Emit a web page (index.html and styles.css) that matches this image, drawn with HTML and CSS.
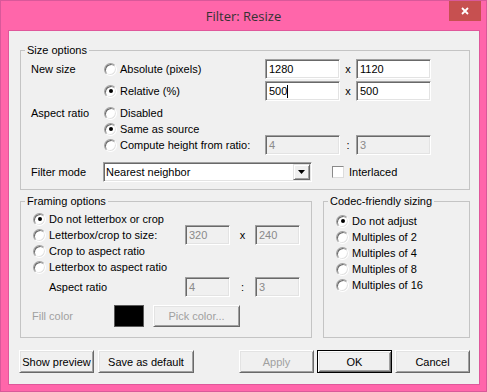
FILE: index.html
```html
<!DOCTYPE html>
<html lang="en">
<head>
    <meta charset="UTF-8">
    <title>Filter: Resize</title>
    <link rel="stylesheet" href="styles.css">
</head>
<body>
    <div class="window">
        <div class="titlebar">
            <span class="title">Filter: Resize</span>
            <span class="close">
                <svg width="8" height="8" viewBox="0 0 8 8"><path d="M1 1L7 7M7 1L1 7" stroke="#fff" stroke-width="1.8"/></svg>
            </span>
        </div>
        <div class="client">
            <fieldset class="group">
                <legend>Size options</legend>
                <div class="body size-body">
                    <div class="srow">
                        <span class="lbl">New size</span>
                        <span class="opt"><span class="radio"></span>Absolute (pixels)</span>
                        <span class="box">1280</span><span class="sep">x</span><span class="box">1120</span>
                    </div>
                    <div class="srow gap2">
                        <span class="lbl"></span>
                        <span class="opt"><span class="radio checked"></span>Relative (%)</span>
                        <span class="box">500<span class="caret"></span></span><span class="sep">x</span><span class="box">500</span>
                    </div>
                    <div class="srow r16 gap4">
                        <span class="lbl">Aspect ratio</span>
                        <span class="opt"><span class="radio"></span>Disabled</span>
                    </div>
                    <div class="srow r16">
                        <span class="lbl"></span>
                        <span class="opt"><span class="radio checked"></span>Same as source</span>
                    </div>
                    <div class="srow r16">
                        <span class="lbl"></span>
                        <span class="opt"><span class="radio"></span>Compute height from ratio:</span>
                        <span class="box disabled">4</span><span class="sep">:</span><span class="box disabled">3</span>
                    </div>
                    <div class="srow filter-row">
                        <span class="lbl filter-lbl">Filter mode</span>
                        <span class="combo">
                            <span class="combo-text">Nearest neighbor</span>
                            <span class="combo-btn">
                                <svg width="7" height="4" viewBox="0 0 7 4"><path d="M0 0H7L3.5 4Z" fill="#000"/></svg>
                            </span>
                        </span>
                        <span class="check"></span>
                        <span>Interlaced</span>
                    </div>
                </div>
            </fieldset>

            <div class="groups">
                <fieldset class="group framing">
                    <legend>Framing options</legend>
                    <div class="body framing-body">
                        <div class="frow"><span class="radio checked"></span>Do not letterbox or crop</div>
                        <div class="frow">
                            <span class="fopt"><span class="radio"></span>Letterbox/crop to size:</span>
                            <span class="box small disabled">320</span><span class="fsep">x</span><span class="box small disabled">240</span>
                        </div>
                        <div class="frow"><span class="radio"></span>Crop to aspect ratio</div>
                        <div class="frow"><span class="radio"></span>Letterbox to aspect ratio</div>
                        <div class="frow aspect-row">
                            <span class="fopt indent">Aspect ratio</span>
                            <span class="box small disabled">4</span><span class="fsep">:</span><span class="box small disabled">3</span>
                        </div>
                        <div class="frow fill-row">
                            <span class="fill-lbl">Fill color</span>
                            <span class="swatch"></span>
                            <span class="btn pick disabled-text">Pick color...</span>
                        </div>
                    </div>
                </fieldset>
                <fieldset class="group codec">
                    <legend>Codec-friendly sizing</legend>
                    <div class="body codec-body">
                        <div class="frow"><span class="radio checked"></span>Do not adjust</div>
                        <div class="frow"><span class="radio"></span>Multiples of 2</div>
                        <div class="frow"><span class="radio"></span>Multiples of 4</div>
                        <div class="frow"><span class="radio"></span>Multiples of 8</div>
                        <div class="frow"><span class="radio"></span>Multiples of 16</div>
                    </div>
                </fieldset>
            </div>

            <div class="buttons">
                <span class="btn">Show preview</span>
                <span class="btn wide">Save as default</span>
                <span class="btn push disabled-text">Apply</span>
                <span class="btn default">OK</span>
                <span class="btn">Cancel</span>
            </div>
        </div>
    </div>
</body>
</html>
```

FILE: styles.css
```css
* {
    box-sizing: border-box;
}
body {
    margin: 0;
    font-family: "Liberation Sans", Arial, sans-serif;
    font-size: 11px;
    color: #000;
}
.window {
    width: 487px;
    height: 392px;
    background: #ff66aa;
    border: 1px solid #d9589a;
    display: flex;
    flex-direction: column;
}
.titlebar {
    height: 29px;
    flex: none;
    display: grid;
    grid-template-columns: 1fr auto 1fr;
    align-items: center;
}
.title {
    grid-column: 2;
    font-family: "Open Sans", sans-serif;
    font-size: 13px;
    color: #333;
    line-height: 16px;
    padding-top: 1px;
}
.close {
    grid-column: 3;
    justify-self: end;
    align-self: start;
    width: 32px;
    height: 20px;
    margin-right: 5px;
    background: #c75050;
    display: flex;
    align-items: center;
    justify-content: center;
}
.client {
    flex: 1;
    margin: 0 6px 6px 7px;
    background: #f0f0f0;
    border: 1px solid #e0579b;
    padding: 12px 9px 0 10px;
}

/* group boxes */
.group {
    margin: 0 0 0 1px;
    padding: 0;
    border: 1px solid #c4c4c4;
    min-width: 0;
}
.group legend {
    margin-left: 4px;
    padding: 0 2px;
    line-height: 14px;
}
.size-body {
    padding: 2px 0 7px 10px;
}
.groups {
    display: flex;
    margin-top: 4px;
}
.framing {
    width: 292px;
    flex: none;
}
.codec {
    flex: 1;
    margin-left: 11px;
    margin-right: 0;
}
.framing-body {
    padding: 3px 0 10px 12px;
}
.codec-body {
    padding: 5px 0 0 12px;
}

/* rows */
.srow {
    display: flex;
    align-items: center;
    height: 20px;
}
.srow.r16 {
    height: 16px;
}
.gap2 {
    margin-top: 2px;
}
.gap4 {
    margin-top: 4px;
}
.filter-row {
    margin-top: 9px;
}
.lbl {
    width: 73px;
    flex: none;
}
.filter-lbl {
    width: 72px;
}
.opt {
    width: 161px;
    flex: none;
    display: flex;
    align-items: center;
}
.sep {
    width: 16px;
    flex: none;
    text-align: center;
}
.frow {
    display: flex;
    align-items: center;
    height: 16px;
}
.fopt {
    width: 152px;
    flex: none;
    display: flex;
    align-items: center;
}
.fopt.indent {
    padding-left: 16px;
}
.fsep {
    width: 25px;
    flex: none;
    text-align: center;
}
.aspect-row {
    height: 20px;
    margin-top: 2px;
}
.fill-row {
    height: 22px;
    margin-top: 8px;
}
.fill-lbl {
    width: 82px;
    margin-left: -1px;
    color: #a0a0a0;
}

/* controls */
.radio {
    width: 13px;
    height: 13px;
    flex: none;
    margin-right: 3px;
    border-radius: 50%;
    background: #fff;
    border: 1px solid;
    border-color: #a0a0a0 #fff #fff #a0a0a0;
    box-shadow: inset 1px 1px 0 #696969, inset -1px -1px 0 #e3e3e3;
    display: flex;
    align-items: center;
    justify-content: center;
}
.radio.checked::after {
    content: "";
    width: 4px;
    height: 4px;
    border-radius: 50%;
    background: #000;
}
.check {
    width: 12px;
    height: 12px;
    flex: none;
    margin: 0 5px 0 20px;
    background: #fff;
    border: 1px solid;
    border-color: #8a8a8a #dcdcdc #dcdcdc #8a8a8a;
}
.box {
    width: 75px;
    height: 20px;
    flex: none;
    display: flex;
    align-items: center;
    padding-left: 3px;
    background: #fff;
    border: 1px solid;
    border-color: #a0a0a0 #fff #fff #a0a0a0;
    box-shadow: inset 1px 1px 0 #696969, inset -1px -1px 0 #e3e3e3;
}
.box.small {
    width: 45px;
}
.box.disabled {
    background: #f0f0f0;
    color: #8a8a8a;
}
.caret {
    width: 1px;
    height: 13px;
    background: #000;
}
.combo {
    width: 209px;
    height: 20px;
    flex: none;
    display: flex;
    background: #fff;
    border: 1px solid;
    border-color: #a0a0a0 #fff #fff #a0a0a0;
    box-shadow: inset 1px 1px 0 #696969, inset -1px -1px 0 #e3e3e3;
    padding: 1px;
}
.combo-text {
    flex: 1;
    display: flex;
    align-items: center;
    padding-left: 1px;
}
.combo-btn {
    width: 17px;
    flex: none;
    display: flex;
    align-items: center;
    justify-content: center;
    background: #f0f0f0;
    border: 1px solid;
    border-color: #e3e3e3 #696969 #696969 #e3e3e3;
    box-shadow: inset 1px 1px 0 #fff, inset -1px -1px 0 #a0a0a0;
}
.swatch {
    width: 30px;
    height: 22px;
    flex: none;
    margin-right: 9px;
    background: #000;
    border: 1px solid #5a5a5a;
}

/* push buttons */
.btn {
    width: 75px;
    height: 23px;
    flex: none;
    display: flex;
    align-items: center;
    justify-content: center;
    background: #f0f0f0;
    border: 1px solid;
    border-color: #fff #696969 #696969 #fff;
    box-shadow: inset 1px 1px 0 #e3e3e3, inset -1px -1px 0 #a0a0a0;
}
.btn.pick {
    width: 87px;
    height: 22px;
}
.btn.wide {
    width: 96px;
    margin-left: 4px;
}
.btn.push {
    margin-left: auto;
}
.btn.default {
    margin: 0 3px;
    border-color: #000;
    box-shadow: inset 1px 1px 0 #fff, inset -1px -1px 0 #696969, inset 2px 2px 0 #e3e3e3, inset -2px -2px 0 #a0a0a0;
}
.disabled-text {
    color: #a0a0a0;
}
.buttons {
    display: flex;
    margin-top: 12px;
}
```
